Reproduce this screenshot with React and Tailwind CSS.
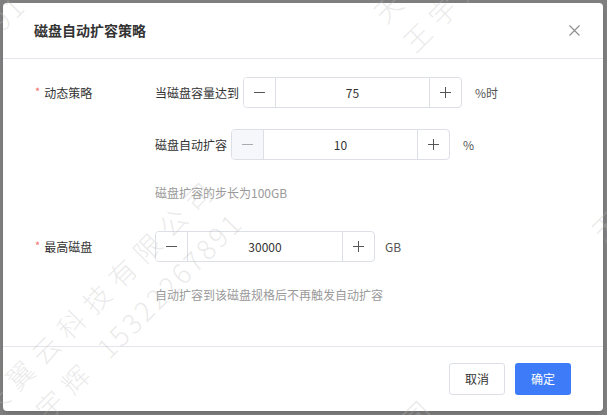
import React from 'react';

const FONT = "font-['Noto_Sans_CJK_SC','Noto_Sans',sans-serif]";

// watermark tiles: along-line period 556px, line-to-line tile offset 435 in x+y
const MARKS = [];
for (const k of [-1, 0, 1]) {
  for (const j of [-1, 0, 1, 2]) {
    MARKS.push({ x: -30 + 393 * j + 217.5 * k, y: 395 - 393 * j + 217.5 * k });
  }
}

function MinusIcon({ disabled }) {
  return (
    <svg width="11" height="11" viewBox="0 0 11 11">
      <line x1="0" y1="5.5" x2="11" y2="5.5" stroke={disabled ? '#a8abb2' : '#555'} strokeWidth="1" />
    </svg>
  );
}

function PlusIcon() {
  return (
    <svg width="11" height="11" viewBox="0 0 11 11">
      <line x1="0" y1="5.5" x2="11" y2="5.5" stroke="#555" strokeWidth="1" />
      <line x1="5.5" y1="0" x2="5.5" y2="11" stroke="#555" strokeWidth="1" />
    </svg>
  );
}

function NumberInput({ value, width, minDisabled }) {
  return (
    <div className={`${width} h-[31px] flex border border-[#dcdfe6] rounded-[4px] overflow-hidden`}>
      <div
        className={`w-[32px] flex items-center justify-center border-r border-[#dcdfe6] ${
          minDisabled ? 'bg-[#f5f7fa]' : 'bg-white'
        }`}
      >
        <MinusIcon disabled={minDisabled} />
      </div>
      <div className="flex-1 flex items-center justify-center text-[12px] text-[#333]">{value}</div>
      <div className="w-[32px] flex items-center justify-center border-l border-[#dcdfe6]">
        <PlusIcon />
      </div>
    </div>
  );
}

function FormLabel({ children }) {
  return (
    <div className="w-[120px] shrink-0 flex items-center text-[12px] text-[#333]">
      <span className="text-[#f56c6c] text-[11px] mr-[4px] -mt-[3px]">*</span>
      {children}
    </div>
  );
}

export default function App() {
  return (
    <div className={`relative w-[607px] h-[415px] overflow-hidden bg-[#7f7f7f] pl-[3px] pt-[3px] ${FONT}`}>
      {/* ── Dialog ───────────────────────────── */}
      <div className="w-[600px] h-[408px] bg-white rounded-[4px] flex flex-col shadow-md">
        <div className="h-[56px] shrink-0 flex items-center justify-between pl-[31px] pr-[23px] border-b border-[#e4e4ee]">
          <h1 className="text-[14px] font-bold text-[#333]">磁盘自动扩容策略</h1>
          <svg width="11" height="11" viewBox="0 0 11 11">
            <path d="M0.5 0.5 L10.5 10.5 M10.5 0.5 L0.5 10.5" stroke="#8c8c8c" strokeWidth="1.1" />
          </svg>
        </div>

        <div className="flex-1 flex flex-col pl-[32px] pt-[18px]">
          {/* Dynamic policy */}
          <div className="flex h-[31px]">
            <FormLabel>动态策略</FormLabel>
            <div className="flex items-center text-[12px] text-[#333]">
              <span className="mr-[4px]">当磁盘容量达到</span>
              <NumberInput value="75" width="w-[219px]" />
              <span className="ml-[13px] text-[#555]">%时</span>
            </div>
          </div>

          <div className="flex h-[31px] mt-[21px]">
            <div className="w-[120px] shrink-0" />
            <div className="flex items-center text-[12px] text-[#333]">
              <span className="mr-[4px]">磁盘自动扩容</span>
              <NumberInput value="10" width="w-[219px]" minDisabled />
              <span className="ml-[13px] text-[#555]">%</span>
            </div>
          </div>

          <p className="ml-[120px] mt-[24px] text-[12px] leading-[18px] text-[#9a9a9a]">磁盘扩容的步长为100GB</p>

          {/* Max disk */}
          <div className="flex h-[31px] mt-[29px]">
            <FormLabel>最高磁盘</FormLabel>
            <div className="flex items-center text-[12px]">
              <NumberInput value="30000" width="w-[220px]" />
              <span className="ml-[10px] text-[#555]">GB</span>
            </div>
          </div>

          <p className="ml-[120px] mt-[24px] text-[12px] leading-[18px] text-[#9a9a9a]">
            自动扩容到该磁盘规格后不再触发自动扩容
          </p>
        </div>

        <div className="h-[65px] shrink-0 flex items-center justify-end gap-[10px] pr-[32px] border-t border-[#e4e4ee]">
          <button className="w-[56px] h-[32px] rounded-[3px] border border-[#dcdfe6] bg-white text-[12px] text-[#333]">
            取消
          </button>
          <button className="w-[56px] h-[32px] rounded-[3px] bg-[#3d7bf8] text-[12px] text-white">确定</button>
        </div>
      </div>

      {/* ── Watermark ───────────────────────────── */}
      <div className="pointer-events-none absolute inset-0 overflow-hidden">
        {MARKS.map((m, i) => (
          <div
            key={i}
            className="absolute origin-top-left -rotate-45 whitespace-nowrap text-[27px] leading-[42px] tracking-[9px] font-light text-[rgba(190,190,190,0.32)]"
            style={{ left: m.x, top: m.y }}
          >
            <div>天翼云科技有限公司</div>
            <div>
              王宇辉 <span className="tracking-[3px]">15322267891</span>
            </div>
          </div>
        ))}
      </div>
    </div>
  );
}
